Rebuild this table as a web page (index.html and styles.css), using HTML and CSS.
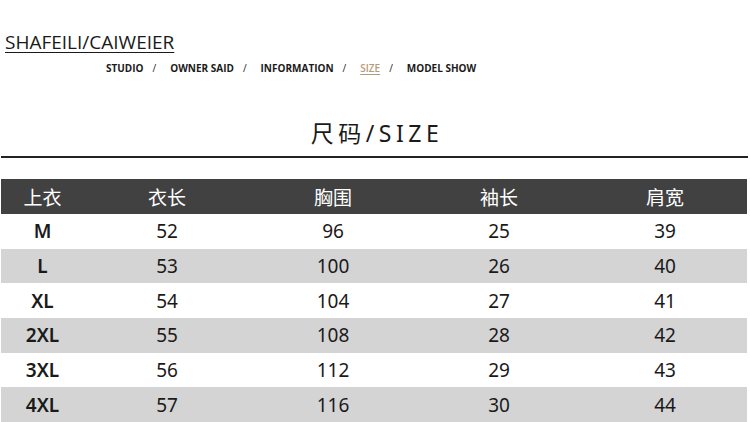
FILE: index.html
```html
<!DOCTYPE html>
<html>
<head>
<meta charset="utf-8">
<link rel="stylesheet" href="styles.css">
</head>
<body>
<div class="page">
  <header class="top">
    <div class="brand">SHAFEILI/CAIWEIER</div>
    <nav class="nav">
      <span>STUDIO</span><span class="sep">/</span>
      <span>OWNER SAID</span><span class="sep">/</span>
      <span>INFORMATION</span><span class="sep">/</span>
      <span class="active">SIZE</span><span class="sep">/</span>
      <span>MODEL SHOW</span>
    </nav>
  </header>
  <h1 class="title">尺码/SIZE</h1>
  <div class="rule"></div>
  <div class="table">
    <div class="row head"><div>上衣</div><div>衣长</div><div>胸围</div><div>袖长</div><div>肩宽</div></div>
    <div class="row"><div class="size">M</div><div>52</div><div>96</div><div>25</div><div>39</div></div>
    <div class="row alt"><div class="size">L</div><div>53</div><div>100</div><div>26</div><div>40</div></div>
    <div class="row"><div class="size">XL</div><div>54</div><div>104</div><div>27</div><div>41</div></div>
    <div class="row alt"><div class="size">2XL</div><div>55</div><div>108</div><div>28</div><div>42</div></div>
    <div class="row"><div class="size">3XL</div><div>56</div><div>112</div><div>29</div><div>43</div></div>
    <div class="row alt"><div class="size">4XL</div><div>57</div><div>116</div><div>30</div><div>44</div></div>
  </div>
</div>
</body>
</html>
```
FILE: styles.css
```css
html, body {
  margin: 0;
  padding: 0;
  background: #fff;
}
body {
  font-family: "Noto Sans", "Noto Sans CJK SC", sans-serif;
  color: #111;
  width: 750px;
  height: 422px;
  overflow: hidden;
}
.page {
  padding-top: 31px;
}
.top {
  display: flex;
  flex-direction: column;
}
.brand {
  font-family: "Open Sans", sans-serif;
  font-size: 19px;
  line-height: 22px;
  letter-spacing: 0px;
  color: #1a1a1a;
  text-decoration: underline;
  text-decoration-thickness: 1px;
  text-underline-offset: 3px;
  margin-left: 5px;
  width: max-content;
}
.nav {
  display: flex;
  margin-left: 106px;
  margin-top: 8px;
  font-family: "Open Sans", sans-serif;
  font-weight: 700;
  font-size: 10px;
  line-height: 14px;
  color: #1a1a1a;
  letter-spacing: 0px;
}
.nav .sep {
  font-weight: 400;
  margin: 0 14px 0 9px;
}
.nav .active {
  color: #b39a7a;
  font-weight: 600;
  text-decoration: underline;
  text-underline-offset: 2px;
}
.title {
  margin: 44px 0 0 0;
  text-align: center;
  font-family: "Noto Sans", "Noto Sans CJK SC", sans-serif;
  font-weight: 400;
  font-size: 23px;
  line-height: 28px;
  letter-spacing: 4.5px;
  color: #1a1a1a;
  padding-left: 4px;
}
.rule {
  margin-top: 9px;
  margin-left: 1px;
  width: 747px;
  height: 2px;
  background: #222;
}
.table {
  margin-top: 21px;
  margin-left: 1px;
  width: 746px;
}
.row {
  display: grid;
  grid-template-columns: 83px repeat(4, 166px);
  height: 34.7px;
  align-items: center;
  font-size: 19px;
  color: #1a1a1a;
}
.row > div {
  text-align: center;
}
.row.head {
  height: 35px;
  background: #414141;
  color: #fff;
  font-family: "Noto Sans CJK SC", sans-serif;
  font-size: 19px;
}
.row.alt {
  background: #d4d4d4;
}
.size {
  font-weight: 600;
}
```
